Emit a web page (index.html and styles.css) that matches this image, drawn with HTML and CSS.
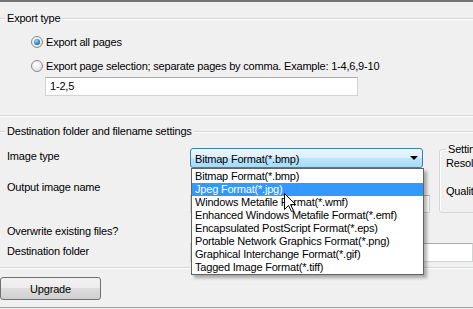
FILE: index.html
```html
<!DOCTYPE html>
<html lang="en">
<head>
    <meta charset="UTF-8">
    <meta name="viewport" content="width=device-width, initial-scale=1.0">
    <title>Export settings</title>
    <link rel="stylesheet" href="styles.css">
</head>
<body>
    <div class="window">
        <section class="group first">
            <div class="group-head"><span>Export type</span></div>
            <div class="radio-row first-row"><span class="radio checked"></span><span>Export all pages</span></div>
            <div class="radio-row"><span class="radio"></span><span>Export page selection; separate pages by comma. Example: 1-4,6,9-10</span></div>
            <div class="textbox pages">1-2,5</div>
        </section>

        <section class="group second">
            <div class="group-head"><span>Destination folder and filename settings</span></div>
            <div class="top-row">
                <div class="left-col">
                    <div class="field-row image-type">
                        <span class="label">Image type</span>
                        <div class="combo">
                            <span class="combo-text">Bitmap Format(*.bmp)</span>
                            <span class="arrow"></span>
                            <ul class="dropdown">
                                <li>Bitmap Format(*.bmp)</li>
                                <li class="selected">Jpeg Format(*.jpg)</li>
                                <li>Windows Metafile Format(*.wmf)</li>
                                <li>Enhanced Windows Metafile Format(*.emf)</li>
                                <li>Encapsulated PostScript Format(*.eps)</li>
                                <li>Portable Network Graphics Format(*.png)</li>
                                <li>Graphical Interchange Format(*.gif)</li>
                                <li>Tagged Image Format(*.tiff)</li>
                            </ul>
                            <svg class="cursor" width="12" height="19" viewBox="0 0 12 19">
                                <path d="M0.5,0.5 L0.5,16.5 L4.5,12.5 L7.5,18.5 L9.5,17.5 L6.5,11.5 L11.5,11.5 Z" fill="#fff" stroke="#000" stroke-width="1"/>
                            </svg>
                        </div>
                    </div>
                    <div class="field-row output-name">
                        <span class="label">Output image name</span>
                        <div class="textbox name"></div>
                    </div>
                </div>
                <fieldset class="settings">
                    <legend>Settings</legend>
                    <div>Resolution</div>
                    <div class="quality">Quality</div>
                </fieldset>
            </div>
            <div class="overwrite">Overwrite existing files?</div>
            <div class="field-row dest">
                <span class="label">Destination folder</span>
                <div class="textbox folder"></div>
            </div>
        </section>

        <div class="actions">
            <button class="button">Upgrade</button>
        </div>
    </div>
</body>
</html>
```
FILE: styles.css
```css
body {
    margin: 0;
    width: 473px;
    height: 309px;
    overflow: hidden;
    background-color: #f0f0f0;
    color: #000;
    font-family: "Liberation Sans", Arial, sans-serif;
    font-size: 11px;
    letter-spacing: -0.2px;
    line-height: 14px;
}
.window {
    border-top: 2px solid #747474;
}
.group {
    border-bottom: 1px solid #d6d6d6;
    box-shadow: 0 1px 0 #fff;
}
.group.first {
    padding-bottom: 19px;
}
.group.second {
    padding-bottom: 5px;
}
.group-head {
    display: flex;
    height: 14px;
    margin-top: 9px;
}
.group.second .group-head {
    margin-top: 8px;
}
.group-head::before,
.group-head::after {
    content: "";
    align-self: flex-start;
    margin-top: 7px;
    border-top: 1px solid #d6d6d6;
    border-bottom: 1px solid #fff;
}
.group-head::before {
    width: 5px;
}
.group-head::after {
    flex: 1;
}
.group-head span {
    padding: 0 2px;
    white-space: nowrap;
}
.radio-row {
    display: flex;
    align-items: center;
    height: 16px;
    margin-top: 8px;
    padding-left: 31px;
    white-space: nowrap;
}
.radio-row.first-row {
    margin-top: 9px;
}
.radio {
    box-sizing: border-box;
    width: 12px;
    height: 12px;
    margin-right: 3px;
    border: 1px solid #8a8a8a;
    border-radius: 50%;
    background: radial-gradient(circle at 40% 35%, #fff 0%, #e8e8e8 60%, #cfcfcf 100%);
    position: relative;
}
.radio.checked::after {
    content: "";
    position: absolute;
    left: 2px;
    top: 2px;
    width: 6px;
    height: 6px;
    border-radius: 50%;
    background: radial-gradient(circle at 40% 35%, #9fe0fb 0%, #2e7fc4 55%, #154a85 100%);
}
.textbox {
    box-sizing: border-box;
    height: 19px;
    border: 1px solid #d0d3d8;
    border-top-color: #abadb3;
    background-color: #fff;
    line-height: 17px;
    padding-left: 4px;
}
.textbox.pages {
    width: 313px;
    margin: 3px 0 0 45px;
}
.top-row {
    display: flex;
    align-items: flex-start;
}
.left-col {
    box-sizing: border-box;
    flex: none;
    width: 439px;
    padding: 10px 0 0 7px;
}
.field-row {
    display: flex;
    align-items: flex-start;
}
.label {
    flex: none;
    width: 183px;
    white-space: nowrap;
}
.image-type {
    height: 20px;
}
.image-type .label {
    padding-top: 1px;
}
.combo {
    box-sizing: border-box;
    position: relative;
    z-index: 2;
    display: flex;
    align-items: center;
    width: 233px;
    height: 20px;
    border: 1px solid #3c7fb1;
    border-radius: 3px;
    background: linear-gradient(#eaf6fd 0%, #d9f0fc 50%, #bee6fd 50%, #a7d9f5 100%);
    padding-left: 4px;
}
.combo-text {
    flex: 1;
    padding-top: 1px;
}
.arrow {
    width: 0;
    height: 0;
    margin-right: 4px;
    border-left: 4px solid transparent;
    border-right: 4px solid transparent;
    border-top: 4px solid #000;
}
.dropdown {
    position: absolute;
    top: 19px;
    left: 0;
    box-sizing: border-box;
    width: 233px;
    margin: 0;
    padding: 1px 0 0 0;
    list-style: none;
    border: 1px solid #646464;
    background-color: #fff;
    box-shadow: 3px 3px 3px rgba(0, 0, 0, 0.3);
}
.dropdown li {
    height: 13px;
    line-height: 13px;
    padding-left: 3px;
    white-space: nowrap;
}
.dropdown li.selected {
    background-color: #3399ff;
    color: #fff;
}
.cursor {
    position: absolute;
    left: 93px;
    top: 44px;
}
.output-name {
    margin-top: 12px;
}
.textbox.name {
    width: 240px;
    height: 18px;
    margin-top: 15px;
}
.settings {
    flex: none;
    width: 120px;
    margin: 4px 0 0 0;
    padding: 0 0 14px 6px;
    border: 1px solid #d6d6d6;
    border-radius: 3px;
    box-shadow: inset 1px 1px 0 #fff;
}
.settings legend {
    padding: 0 2px;
    line-height: 14px;
}
.settings .quality {
    margin-top: 14px;
}
.overwrite {
    margin-top: 11px;
    padding-left: 7px;
}
.dest {
    margin-top: 5px;
    padding-left: 7px;
}
.dest .label {
    padding-top: 1px;
}
.textbox.folder {
    width: 300px;
}
.actions {
    padding: 9px 0 7px 0;
    border-bottom: 1px solid #a0a0a0;
}
.button {
    display: block;
    box-sizing: border-box;
    width: 101px;
    height: 23px;
    border: 1px solid #707070;
    border-radius: 3px;
    background: linear-gradient(#f2f2f2 0%, #ebebeb 50%, #dddddd 50%, #cfcfcf 100%);
    font-family: inherit;
    font-size: 11px;
    letter-spacing: -0.2px;
    color: #000;
    padding: 0;
}
```
